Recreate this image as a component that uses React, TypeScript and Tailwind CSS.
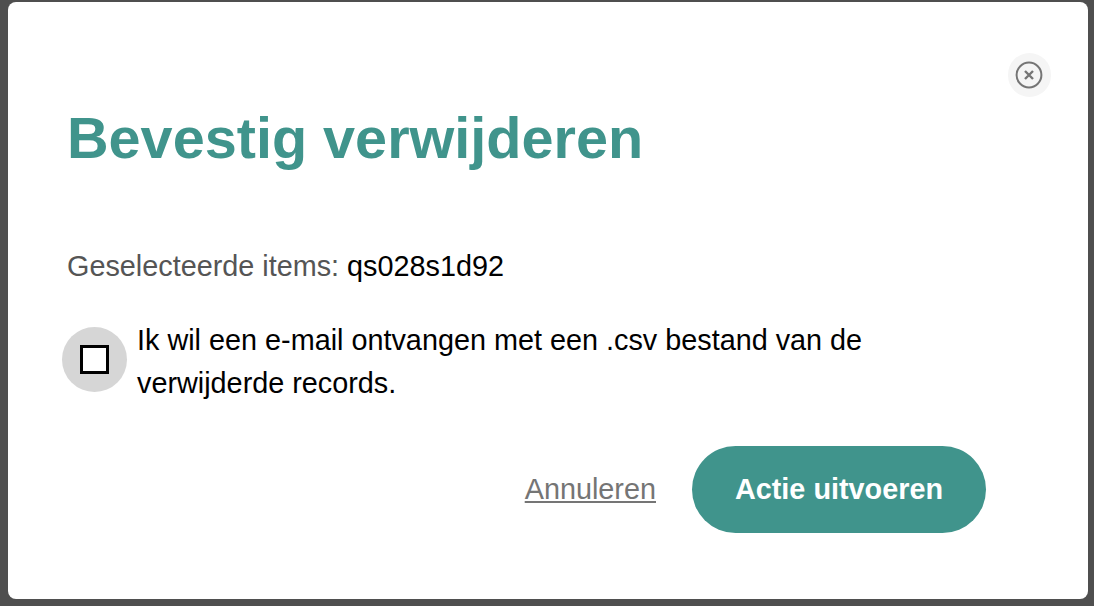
export default function App() {
  return (
    <div className="w-[1094px] h-[606px] bg-[#4f4f4f] pt-[2px] pl-[8px] overflow-hidden font-['Liberation_Sans',Arial,sans-serif]">
      <div className="w-[1080px] h-[597px] bg-white rounded-lg pt-[51px] pl-[59px] pr-[37px] flex flex-col">
        <div className="flex justify-end h-[44px]">
          <button className="w-[43px] h-[44px] rounded-full bg-[#f5f5f5] flex items-center justify-center">
            <svg className="-ml-[1px]" width="28" height="28" viewBox="0 0 28 28" fill="none" stroke="#757575">
              <circle cx="14" cy="14" r="12.4" strokeWidth="2" />
              <path d="M10 10l8 8M18 10l-8 8" strokeWidth="2.4" />
            </svg>
          </button>
        </div>
        <h1 className="mt-[11px] text-[57.6px] leading-[60px] font-bold text-[#40948c]">Bevestig verwijderen</h1>
        <p className="mt-[82px] text-[28.8px] leading-[32px] text-[#555555]">
          Geselecteerde items: <span className="text-black">qs028s1d92</span>
        </p>
        <div className="mt-[36px] -ml-[5px] flex items-start gap-[10px]">
          <div className="mt-[9px] w-[65px] h-[65px] rounded-full bg-[#d6d6d6] flex items-center justify-center shrink-0">
            <div className="w-[29px] h-[29px] bg-white border-[3px] border-black" />
          </div>
          <p className="mt-[1px] w-[780px] text-[28.8px] leading-[43px] text-black">
            Ik wil een e-mail ontvangen met een .csv bestand van de verwijderde records.
          </p>
        </div>
        <div className="mt-[41px] pr-[65px] flex items-center justify-end gap-[36px]">
          <a className="text-[28.8px] text-[#757575] underline">Annuleren</a>
          <button className="w-[294px] h-[87px] rounded-full bg-[#40948c] text-white text-[28.8px] font-bold">Actie uitvoeren</button>
        </div>
      </div>
    </div>
  );
}
